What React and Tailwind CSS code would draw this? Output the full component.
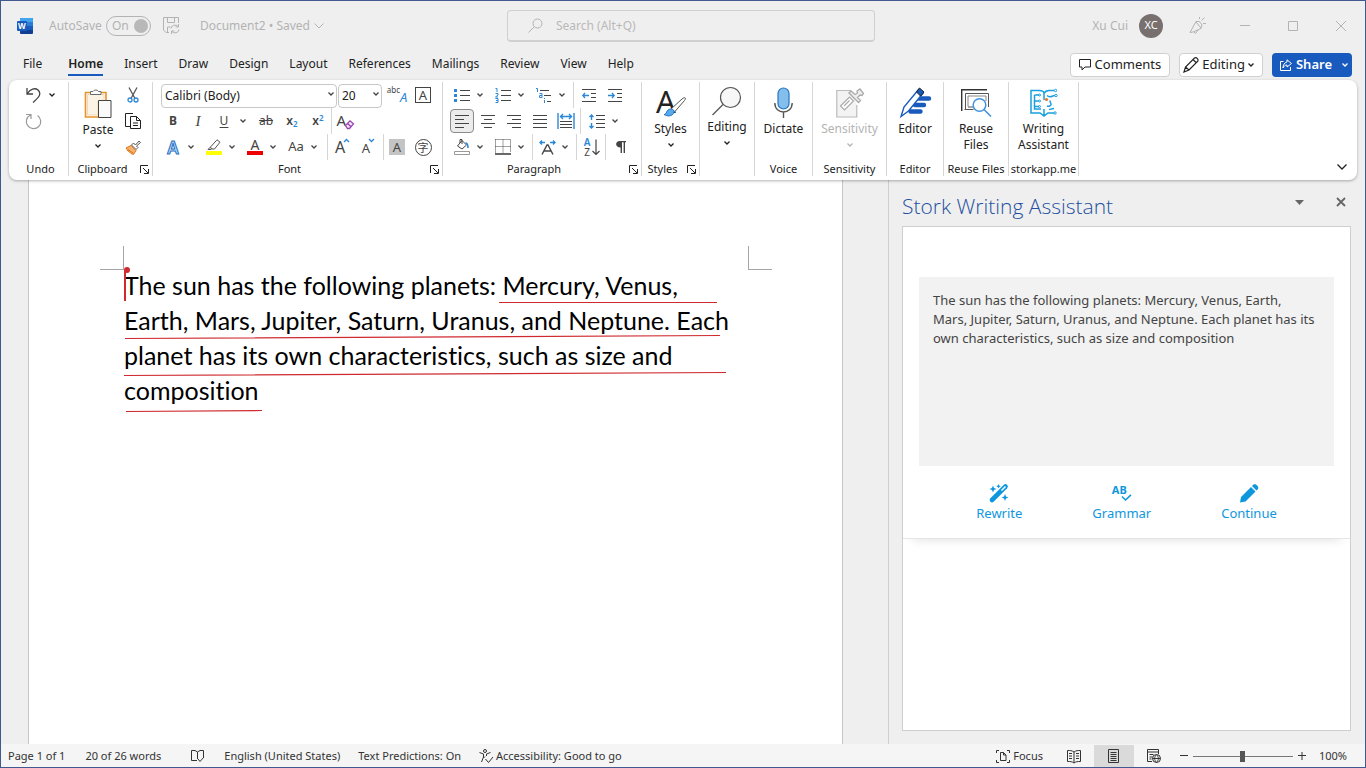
import React, { useState } from 'react';

const Icon = ({ w = 16, h = 16, className = '', children }) => (
    <svg
        width={w}
        height={h}
        viewBox={`0 0 ${w} ${h}`}
        fill="none"
        stroke="currentColor"
        className={`shrink-0 overflow-visible ${className}`}
        aria-hidden="true"
    >
        {children}
    </svg>
);

const Glyph = ({ x, y, size, fill = 'currentColor', bold, children }) => (
    <text x={x} y={y} fontSize={size} fill={fill} stroke="none" fontWeight={bold ? 700 : 400}>
        {children}
    </text>
);

const Chevron = ({ className = '' }) => (
    <Icon w={6} h={4} className={className}>
        <path d="M0.5 0.5 3 3 5.5 0.5" strokeWidth="1.3" />
    </Icon>
);

const Tool = ({ label, wide, children }) => (
    <button aria-label={label} className={`flex h-[26px] shrink-0 items-center justify-center ${wide ? 'w-[26px]' : 'w-6'}`}>
        {children}
    </button>
);

const Drop = ({ label }) => (
    <button aria-label={label} className="flex h-[26px] w-3 shrink-0 items-center justify-center">
        <Chevron />
    </button>
);

const Split = ({ label, children }) => (
    <div className="mr-[5px] flex">
        <Tool label={label}>{children}</Tool>
        <Drop label={`${label} options`} />
    </div>
);

const Rule = ({ className = '' }) => <div className={`h-[26px] w-px shrink-0 bg-[#d6d6d6] ${className}`} />;

const Group = ({ title, launcher, width, children }) => (
    <section className={`flex shrink-0 flex-col border-r border-[#d6d6d6] ${width}`}>
        <div className="h-[81px]">{children}</div>
        <div className="relative flex h-3 items-center justify-center text-[11px] leading-3 whitespace-nowrap">
            <span className={launcher ? 'mr-4' : ''}>{title}</span>
            {launcher && (
                <button aria-label={`${title} settings`} className="absolute top-0.5 right-[3px]">
                    <Icon w={9} h={9}>
                        <path d="M0.5 8V0.5H8M3 3l5 5M8.5 4v4.5H4" />
                    </Icon>
                </button>
            )}
        </div>
    </section>
);

const BigButton = ({ icon, label, drop, disabled }) => (
    <button disabled={disabled} className={`flex w-full flex-col items-center ${disabled ? 'text-[#b4b4b4]' : ''}`}>
        <span className="flex h-[37px] items-center justify-center">{icon}</span>
        <span className="text-xs leading-4 whitespace-pre-line">{label}</span>
        {drop && <Chevron className="mt-1.5" />}
    </button>
);

const WordLogo = () => (
    <Icon w={16} h={16}>
        <g stroke="none">
            <rect x="3" width="13" height="16" rx="1" fill="#103f91" />
            <path d="M4 0h11a1 1 0 0 1 1 1v3H3V1a1 1 0 0 1 1-1z" fill="#41a5ee" />
            <path d="M3 4h13v4H3z" fill="#2b7cd3" />
            <path d="M3 8h13v4H3z" fill="#185abd" />
            <rect y="3" width="10" height="10" rx="1" fill="#185abd" />
        </g>
        <Glyph x="1" y="11" size="8" fill="#fff" bold>W</Glyph>
    </Icon>
);

const SaveIcon = () => (
    <Icon w={17} h={17}>
        <path d="M6 15.5H3L.5 13V.5h15V6M4.5.5v5h7v-5M4.5 15.5V10h3" />
        <path d="M8 11.5a4 4 0 0 1 7-2M15.5 7v3h-3M16 12.5a4 4 0 0 1-7 2M8.5 17v-3h3" />
    </Icon>
);

const WhatsNewIcon = () => (
    <Icon w={17} h={17}>
        <path d="M1 15.500 7 4.500h3.500L13 8l-1 3.500-8 3.500zM7 5l5 6M5 15l1.500 1.500 2.500-3.500M10.500 2V0M12.500 3.500 15.500.5M14 6.500h3" />
    </Icon>
);

const lines = (rows) => rows.map(([x1, x2], i) => <path key={i} d={`M${x1} ${i * 4 + 1.5}H${x2}`} />);

const Align = ({ rows }) => <Icon w={15} h={15}>{lines(rows)}</Icon>;

const A = ({ size = 'text-[15px]', className = '' }) => <span className={`${size} leading-none ${className}`}>A</span>;

const PasteIcon = () => (
    <Icon w={28} h={31}>
        <path d="M6 4.5H1.5V29H15M17 4.5h5V12" stroke="#e8912d" strokeWidth="1.6" />
        <path d="M3.5 6.5h16.500V13h-6v14H3.5z" fill="#fbf3e6" stroke="#f5d9ae" />
        <path d="M6.5 6.5v-3h2.500a3 2.500 0 0 1 5.500 0h2.500v3z" fill="#fff" stroke="#6b6b6b" />
        <path d="M14.5 12.5h12.500v17h-12.500z" fill="#fafafa" stroke="#444" />
    </Icon>
);

const CutIcon = () => (
    <Icon w={12} h={16}>
        <path d="M2 .5 8 11.500M10 .5 4 11.500" stroke="#555" strokeWidth="1.3" />
        <circle cx="3" cy="13" r="2" stroke="#2b88d8" strokeWidth="1.3" />
        <circle cx="9" cy="13" r="2" stroke="#2b88d8" strokeWidth="1.3" />
    </Icon>
);

const CopyIcon = () => (
    <Icon w={17} h={16}>
        <path d="M5 13.5H.5V.5H8M5.500 3.5h6l4 4v8h-10zM11.5 3.5v4h4M8 10h5M8 12.5h5" />
    </Icon>
);

const PainterIcon = () => (
    <Icon w={16} h={15}>
        <path d="M1 8 6 5.500l5 5L8.500 14.500 6 13.500 4.500 12 3 11z" fill="#f7b26b" stroke="#d8751c" />
        <path d="M3 9.500 8 13" stroke="#d8751c" />
        <path d="m6.500 5 2-2 2 2L14 1l1.500 1.500L11.500 6l1.500 1.500-2 2z" fill="#fff" stroke="#555" />
    </Icon>
);

const ClipboardGroup = () => (
    <Group title="Clipboard" launcher width="w-[84px]">
        <div className="flex pl-2">
            <div className="w-[42px] pt-[3px]">
                <BigButton icon={<PasteIcon />} label="Paste" drop />
            </div>
            <div className="ml-px">
                <Tool label="Cut" wide><CutIcon /></Tool>
                <Tool label="Copy" wide><CopyIcon /></Tool>
                <Tool label="Format painter" wide><PainterIcon /></Tool>
            </div>
        </div>
    </Group>
);

const FontGroup = () => (
    <Group title="Font" launcher width="w-[290px]">
        <div className="pl-2 text-[#444]">
            <div className="flex h-[26px] items-center">
                <div className="relative">
                    <select aria-label="Font name" className="h-6 w-44 appearance-none rounded border border-[#c8c8c8] pl-[3px] text-xs text-[#222]">
                        <option>Calibri (Body)</option>
                    </select>
                    <Chevron className="pointer-events-none absolute top-[10px] right-[3px]" />
                </div>
                <div className="relative ml-px">
                    <select aria-label="Font size" className="h-6 w-11 appearance-none rounded border border-[#c8c8c8] pl-[3px] text-xs text-[#222]">
                        <option>20</option>
                    </select>
                    <Chevron className="pointer-events-none absolute top-[10px] right-[3px]" />
                </div>
                <div className="ml-0.5 flex">
                    <Tool label="Phonetic guide" wide>
                        <span className="flex h-[18px]">
                            <span className="text-[8px] leading-[8px]">abc</span>
                            <A size="text-[13px]" className="self-end text-[#2b88d8] italic" />
                        </span>
                    </Tool>
                    <Tool label="Character border" wide>
                        <span className="flex size-4 items-center justify-center border border-[#444]">
                            <A size="text-[13px]" />
                        </span>
                    </Tool>
                </div>
            </div>
            <div className="flex h-[26px] items-center">
                <Tool label="Bold"><span className="text-xs font-bold">B</span></Tool>
                <Tool label="Italic" wide><span className="font-['Liberation_Serif',serif] text-[15px] italic">I</span></Tool>
                <Tool label="Underline" wide><span className="text-xs underline underline-offset-2">U</span></Tool>
                <Drop label="Underline style" />
                <div className="ml-1 flex">
                    <Tool label="Strikethrough" wide><span className="text-xs line-through">ab</span></Tool>
                    <Tool label="Subscript" wide>
                        <span className="text-xs font-semibold">x<sub className="text-[8px] text-[#2b88d8]">2</sub></span>
                    </Tool>
                    <Tool label="Superscript" wide>
                        <span className="text-xs font-semibold">x<sup className="text-[8px] text-[#2b88d8]">2</sup></span>
                    </Tool>
                </div>
                <Rule />
                <Tool label="Clear formatting" wide>
                    <span className="relative flex h-4 w-[17px]">
                        <A />
                        <Icon w={9} h={9} className="absolute right-0 bottom-0">
                            <path d="M.5 5.500 5 .8l3.500 3L4.500 8.500H2.500zM2.500 3.500 6 6.800" fill="#f3e4f8" stroke="#9a44b5" strokeWidth="1.3" />
                        </Icon>
                    </span>
                </Tool>
            </div>
            <div className="flex h-[26px] items-center">
                <Split label="Text effects">
                    <span className="text-[17px] leading-none font-semibold text-[#bfe0fa] [-webkit-text-stroke:1px_#1f6fc4]">A</span>
                </Split>
                <Split label="Highlight colour">
                    <Icon w={16} h={16}>
                        <path d="M4.500 8 11 .8l3 2.400L8.500 10H5.500zM4.500 8 2 10.500h3l1-1" stroke="#555" />
                        <path d="M0 14h16" stroke="#ff0" strokeWidth="4" />
                    </Icon>
                </Split>
                <Split label="Font colour">
                    <span className="flex w-4 flex-col items-center border-b-4 border-[#e00]"><span className="text-sm leading-3">A</span></span>
                </Split>
                <Split label="Change case"><span className="text-[13px]">Aa</span></Split>
                <Rule className="mr-px ml-0.5" />
                <Tool label="Grow font" wide>
                    <span className="relative pr-1"><A size="text-base" />
                        <Icon w={5} h={3} className="absolute top-1 right-0"><path d="M0 3 2.500.5 5 3" stroke="#2b88d8" strokeWidth="1.3" /></Icon>
                    </span>
                </Tool>
                <Tool label="Shrink font" wide>
                    <span className="relative pr-1"><A size="text-[13px]" />
                        <Icon w={5} h={3} className="absolute top-1 right-0"><path d="M0 0 2.500 2.500 5 0" stroke="#2b88d8" strokeWidth="1.3" /></Icon>
                    </span>
                </Tool>
                <Rule className="ml-0.5" />
                <Tool label="Character shading" wide>
                    <span className="flex size-4 items-center justify-center bg-[#c4c4c4]"><A size="text-[13px]" /></span>
                </Tool>
                <Tool label="Enclose characters" wide>
                    <span className="flex size-[17px] items-center justify-center rounded-full border border-[#444] font-['Noto_Sans_CJK_SC',sans-serif] text-[11px] leading-none">字</span>
                </Tool>
            </div>
        </div>
    </Group>
);

const ParagraphGroup = () => (
    <Group title="Paragraph" launcher width="w-[199px]">
        <div className="pl-[7px] text-[#444]">
            <div className="flex h-[26px] items-center">
                <Split label="Bullets">
                    <Icon w={16} h={15}>
                        <path d="M6 2.5h10M6 7.5h10M6 12.5h10" />
                        <path d="M0 2.5h3M0 7.5h3M0 12.5h3" stroke="#2b88d8" strokeWidth="3" />
                    </Icon>
                </Split>
                <Split label="Numbering">
                    <Icon w={16} h={15}>
                        <path d="M6 2.5h10M6 7.5h10M6 12.5h10" />
                        <path d="M.5.5H2V4M.5 5.500H3V7L.5 9H3M.5 10.500H3v4H.5M1 12.500h2" stroke="#2b88d8" />
                    </Icon>
                </Split>
                <Split label="Multilevel list">
                    <Icon w={16} h={15}>
                        <path d="M4 2.5h9M8 7.5h7M11 13.5h4" />
                        <path d="M0 .5h1.500V4M3.500 5.500H6v4H3.500v-2H6M8.500 12v3M8.500 10v1" stroke="#2b88d8" />
                    </Icon>
                </Split>
                <Rule className="mr-0.5" />
                <Tool label="Decrease indent" wide>
                    <Icon w={15} h={15}>
                        <path d="M0 1.5h14M9 5.5h5M9 9.5h5M0 13.5h14" />
                        <path d="M7 7.5H.8M3 5 .8 7.5 3 10" stroke="#2b88d8" strokeWidth="1.3" />
                    </Icon>
                </Tool>
                <Tool label="Increase indent" wide>
                    <Icon w={15} h={15}>
                        <path d="M0 1.5h14M9 5.5h5M9 9.5h5M0 13.5h14" />
                        <path d="M0 7.5h6.200M4 5l2.200 2.500L4 10" stroke="#2b88d8" strokeWidth="1.3" />
                    </Icon>
                </Tool>
            </div>
            <div className="flex h-[26px] items-center">
                <button aria-label="Align left" className="flex size-6 items-center justify-center rounded border border-[#8a8a8a] bg-[#ececec]">
                    <Align rows={[[0, 14], [0, 9], [0, 14], [0, 9]]} />
                </button>
                <div className="ml-px flex">
                    <Tool label="Centre" wide><Align rows={[[0, 14], [3, 11], [0, 14], [3, 11]]} /></Tool>
                    <Tool label="Align right" wide><Align rows={[[0, 14], [5, 14], [0, 14], [5, 14]]} /></Tool>
                    <Tool label="Justify" wide><Align rows={[[0, 14], [0, 14], [0, 14], [0, 14]]} /></Tool>
                    <Tool label="Distribute" wide>
                        <Icon w={18} h={16}>
                            <path d="M3 8.5h12M3 11.5h12M3 14.5h12" />
                            <path d="M1 0v16M17 0v16M3 3.5h12M6 1 3.500 3.500 6 6M12 1l2.500 2.500L12 6" stroke="#2b88d8" strokeWidth="1.4" />
                        </Icon>
                    </Tool>
                </div>
                <Rule className="mr-1 ml-px" />
                <Tool label="Line spacing">
                    <Icon w={16} h={15}>
                        <path d="M7 1.5h9M7 5.5h9M7 9.5h9M7 13.5h9" />
                        <path d="M2.500 1v5M.5 3l2-2 2 2M2.500 9v5M.5 12l2 2 2-2" stroke="#2b88d8" strokeWidth="1.4" />
                    </Icon>
                </Tool>
                <Drop label="Line spacing options" />
            </div>
            <div className="flex h-[26px] items-center">
                <Split label="Shading">
                    <Icon w={16} h={16}>
                        <path d="M3.500 7 8 1.500l4.500 4.500L8 10zM6 4V.5h2V5" />
                        <path d="M11.500 4c2 0 2.500 2 2.500 5" stroke="#2b88d8" strokeWidth="1.6" />
                        <path d="M.5 12.5h15v3H.5z" stroke="#999" fill="#fff" />
                    </Icon>
                </Split>
                <Split label="Borders">
                    <Icon w={16} h={16}>
                        <path d="M.5.5h15v13M.5.5v13M8 .5v13M.5 7.5h15" strokeDasharray="1 1" />
                        <path d="M0 15h16" strokeWidth="1.6" />
                    </Icon>
                </Split>
                <Rule className="mr-0.5" />
                <Split label="Asian layout">
                    <Icon w={17} h={15}>
                        <path d="M3 14.500 8 5h1l5 9.500M5 11h7" strokeWidth="1.4" />
                        <path d="M6 2.500H1M3 .5l-2 2 2 2M11 2.500h5M14 .5l2 2-2 2" stroke="#2b88d8" strokeWidth="1.4" />
                    </Icon>
                </Split>
                <Rule className="mr-0.5" />
                <Tool label="Sort" wide>
                    <span className="flex items-center gap-0.5">
                        <span className="flex flex-col text-[10px] leading-[10px]">
                            <span className="font-semibold text-[#2b88d8]">A</span>
                            <span>Z</span>
                        </span>
                        <Icon w={8} h={16}><path d="M4 .5v15M.5 12 4 15.500 7.500 12" strokeWidth="1.2" /></Icon>
                    </span>
                </Tool>
                <Rule className="mr-0.5" />
                <Tool label="Show paragraph marks" wide>
                    <Icon w={10} h={12}>
                        <path d="M4 0h6v1.300H9V12H7.600V1.300H6V12H4.600V6.500C-1.200 6.500-1.200 0 4 0z" fill="currentColor" stroke="none" />
                    </Icon>
                </Tool>
            </div>
        </div>
    </Group>
);

const StylesIcon = () => (
    <Icon w={30} h={29}>
        <Glyph x="0" y="25" size="31">A</Glyph>
        <path d="m15 21 11-10c3-2.500 4.500-1 2.500 1.500L18.500 24z" fill="#fff" stroke="#555" />
        <path d="M8 26.500c3 0 2-5 6.500-5.500 3 0 4.500 2 3 4.500-2 3-6 3-9.500 1z" fill="#5aa9ec" stroke="#1f6fc4" />
    </Icon>
);

const FindIcon = () => (
    <Icon w={30} h={30}>
        <circle cx="18.5" cy="11.5" r="10" fill="#f7f7f7" stroke="#555" strokeWidth="1.2" />
        <path d="M11 18.500.5 29" stroke="#555" strokeWidth="1.3" />
    </Icon>
);

const MicIcon = () => (
    <Icon w={19} h={31}>
        <rect x="4" y="1" width="11" height="21" rx="5.5" fill="#83beec" stroke="#2474c4" strokeWidth="1.2" />
        <path d="M.8 16c0 12 17.400 12 17.400 0M9.500 25v6" stroke="#555" strokeWidth="1.4" />
    </Icon>
);

const SensitivityIcon = () => (
    <Icon w={28} h={30}>
        <path d="M15 2.500H.8v26.500h20V17" fill="#f3f3f3" stroke="#bbb" strokeWidth="1.2" />
        <path d="m4.500 18 9-9 4 4-9 9zM8 18l5.500-5.500" fill="#fff" stroke="#aaa" strokeWidth="1.2" />
        <path d="m13 5 9.500 9.500 2-2-3-3 2.500-2.500 2 .5 1.500-2-3.500-4.500-3 2 .5 2-2.500 1.500L15 3z" fill="#eee" stroke="#aaa" strokeWidth="1.3" />
    </Icon>
);

const EditorIcon = () => (
    <Icon w={31} h={31}>
        <path d="M19 11.500h10M15 18h9M10.500 24.500h10" stroke="#185abd" strokeWidth="4.4" strokeLinecap="round" />
        <path d="M1 29.500 4 20 18.500 2.500l4.500 3.800L8.500 24z" fill="#fff" stroke="#185abd" strokeWidth="1.4" />
        <path d="M16.500 5 19.500 1l4.500 4-3.500 4z" fill="#185abd" />
    </Icon>
);

const ReuseIcon = () => (
    <Icon w={31} h={28}>
        <path d="M.7 22V.7H26" stroke="#333" strokeWidth="1.4" />
        <path d="M4.500 20V4.500h23V18M3.500 20.500h9" stroke="#555" />
        <path d="M7 17.500V7h18v5" stroke="#888" />
        <path d="M7 18h6" stroke="#555" />
        <circle cx="18.5" cy="16" r="6.3" fill="#fff" stroke="#4292dc" strokeWidth="1.5" />
        <path d="m23 20.500 7 7" stroke="#4292dc" strokeWidth="1.6" />
    </Icon>
);

const StorkIcon = () => (
    <Icon w={28} h={28} className="text-[#18a0de]">
        <path d="M9 1.500H1V24h9l4 3 4-3h6M14 27V20M9 1.500c3 0 5 1 5 3V11M14 4.500c1-2 2.500-3 5-3h5M4.500 6H9M4.500 12h4M4.500 17.500H9M4.500 6v14H11" strokeWidth="1.5" />
        <path d="M17 6.500c3 3 5 0 8 0M20 11.500c0 2 1 2.500 1 4s-2 2-4 1.500M19 20.500c2 0 2-1 5-1" strokeWidth="1.5" />
        <circle cx="25.5" cy="1.5" r="1.2" />
        <circle cx="26" cy="6.5" r="1.2" />
        <circle cx="25" cy="24" r="1.2" />
        <circle cx="9.5" cy="6" r="1" />
        <circle cx="9.5" cy="12" r="1" />
        <circle cx="9.5" cy="17.5" r="1" />
        <circle cx="16.5" cy="10.5" r="1.6" fill="#e8762c" stroke="none" />
    </Icon>
);

const Ribbon = () => (
    <div className="relative z-10 mx-2 flex h-[100px] shrink-0 rounded-lg bg-white pt-0.5 shadow-[0_1px_3px_rgba(0,0,0,0.3)]">
        <div className="flex min-w-0 flex-1 pb-1">
            <Group title="Undo" width="w-[60px] pl-1">
                <div className="pl-[7px]">
                    <div className="flex">
                        <Tool label="Undo" wide>
                            <Icon w={15} h={16}>
                                <path d="M1 1v6h6M1.500 6.500C4 2 9 .5 12 3c4 4 1 7-5 12.500" stroke="#444" strokeWidth="1.3" />
                            </Icon>
                        </Tool>
                        <Drop label="Undo history" />
                    </div>
                    <div className="text-[#999]">
                        <Tool label="Repeat" wide>
                            <Icon w={17} h={16}>
                                <path d="M1 1.500h5V6M5.500 2a7.200 7.200 0 1 0 7 .5" strokeWidth="1.2" />
                            </Icon>
                        </Tool>
                    </div>
                </div>
            </Group>
            <ClipboardGroup />
            <FontGroup />
            <ParagraphGroup />
            <Group title="Styles" launcher width="w-[58px]">
                <div className="pt-0.5"><BigButton icon={<StylesIcon />} label="Styles" drop /></div>
            </Group>
            <Group title="" width="w-[55px]"><BigButton icon={<FindIcon />} label="Editing" drop /></Group>
            <Group title="Voice" width="w-[58px]">
                <div className="pt-0.5"><BigButton icon={<MicIcon />} label="Dictate" /></div>
            </Group>
            <Group title="Sensitivity" width="w-[74px]">
                <div className="pt-0.5"><BigButton icon={<SensitivityIcon />} label="Sensitivity" drop disabled /></div>
            </Group>
            <Group title="Editor" width="w-[57px]">
                <div className="pt-0.5"><BigButton icon={<EditorIcon />} label="Editor" /></div>
            </Group>
            <Group title="Reuse Files" width="w-[65px]">
                <div className="pt-0.5"><BigButton icon={<ReuseIcon />} label={'Reuse\nFiles'} /></div>
            </Group>
            <Group title="storkapp.me" width="w-[70px]">
                <div className="pt-0.5"><BigButton icon={<StorkIcon />} label={'Writing\nAssistant'} /></div>
            </Group>
        </div>
        <button aria-label="Collapse ribbon" className="self-end p-2.5">
            <Icon w={10} h={6}><path d="M.5.5 5 5 9.500.5" strokeWidth="1.3" /></Icon>
        </button>
    </div>
);

const TitleBar = () => (
    <header className="flex h-[49px] shrink-0 items-center text-xs text-[#b3b3b3]">
        <div className="flex flex-1 basis-0 items-center pl-4">
            <WordLogo />
            <label htmlFor="autosave" className="ml-4">AutoSave</label>
            <span className="relative ml-1 flex h-5 w-[45px] items-center rounded-full border border-[#b3b3b3] pl-[5px]">
                On
                <span className="absolute right-0.5 size-3.5 rounded-full bg-[#b8b8b8]" />
                <input id="autosave" type="checkbox" defaultChecked className="absolute inset-0 cursor-pointer opacity-0" />
            </span>
            <button aria-label="Save" className="ml-3"><SaveIcon /></button>
            <button className="ml-5 flex items-center gap-1 whitespace-nowrap">
                Document2 • Saved
                <Icon w={10} h={6}><path d="M.5.5 5 5 9.500.5" /></Icon>
            </button>
        </div>
        <div className="relative w-[368px]">
            <Icon w={15} h={15} className="absolute top-2 left-[21px]">
                <circle cx="9.5" cy="5.5" r="4.5" />
                <path d="M6 9 .5 14.500" />
            </Icon>
            <input
                aria-label="Search"
                placeholder="Search (Alt+Q)"
                className="h-8 w-full rounded border border-b-2 border-[#d0d0d0] pl-12 text-xs placeholder:text-[#b9b9b9] focus:outline-none"
            />
        </div>
        <div className="flex flex-1 basis-0 items-center justify-end">
            <span className="mr-[11px]">Xu Cui</span>
            <span className="mr-2.5 flex size-6 items-center justify-center rounded-full bg-[#77706e] text-[11px] text-white">XC</span>
            <button aria-label="What's new" className="flex w-12 justify-center"><WhatsNewIcon /></button>
            <button aria-label="Minimize" className="flex w-12 justify-center"><Icon w={10} h={10}><path d="M0 4.5h10" /></Icon></button>
            <button aria-label="Maximize" className="flex w-12 justify-center"><Icon w={10} h={10}><path d="M.5.5h9v9h-9z" /></Icon></button>
            <button aria-label="Close" className="flex w-12 justify-center"><Icon w={10} h={10}><path d="m0 0 10 10M10 0 0 10" /></Icon></button>
        </div>
    </header>
);

const TABS = ['File', 'Home', 'Insert', 'Draw', 'Design', 'Layout', 'References', 'Mailings', 'Review', 'View', 'Help'];

const TabRow = () => {
    const [active, setActive] = useState('Home');

    return (
        <nav className="flex h-[30px] shrink-0 items-center justify-between pr-[13px] pl-[22px] text-xs">
            <div className="flex gap-[21px]">
                {TABS.map((tab) => (
                    <button
                        key={tab}
                        onClick={() => setActive(tab)}
                        className={`border-b-2 leading-5 ${tab === 'File' ? 'mr-[5px]' : ''} ${
                            tab === active ? 'border-[#185abd] font-semibold' : 'border-transparent'
                        }`}
                    >
                        {tab}
                    </button>
                ))}
            </div>
            <div className="flex items-center gap-[9px] text-[13px]">
                <button className="flex h-6 items-center gap-1 rounded border border-[#d0d0d0] bg-white px-2">
                    <Icon w={12} h={12}><path d="M.5.5h11v7.500H6L3 11V8H.5z" /></Icon>
                    Comments
                </button>
                <button className="flex h-6 items-center gap-[3px] rounded border border-[#d0d0d0] bg-white pr-2 pl-[3px]">
                    <Icon w={16} h={16}><path d="M1 15 2.500 10 11.500 1c2-1 4 1 3.500 3L6 13zM10 2.500 13.500 6M2.500 10 6 13" strokeWidth="1.2" /></Icon>
                    Editing
                    <Chevron />
                </button>
                <button className="flex h-6 items-center gap-1 rounded bg-[#185abd] pr-1 pl-2 font-semibold text-white">
                    <Icon w={12} h={12}>
                        <path d="M3.500 2.500h-3v9h10V8M7 .8l4.500 3.700L7 8V6C5 6 4 7 3 9c0-3 1.500-5.500 4-6z" />
                    </Icon>
                    Share
                    <Chevron className="ml-1.5" />
                </button>
            </div>
        </nav>
    );
};

const Page = () => (
    <main className="flex min-w-0 flex-1 pr-[45px] pl-[27px]">
        <div className="flex-1 border-x border-[#c6c6c6] bg-white pt-[88px] pl-[95px]">
            <div className="relative w-[624px]">
                <div className="absolute -top-[22px] -left-6 h-6 w-6 border-r border-b border-[#a6a6a6]" />
                <div className="absolute -top-[22px] -right-6 h-6 w-6 border-b border-l border-[#a6a6a6]" />
                <p className="font-['Lato','Noto_Sans',sans-serif] text-[25px] leading-[35px] whitespace-nowrap text-black [font-variant-ligatures:none]">
                    The sun has the following planets: Mercury, Venus,<br />
                    Earth, Mars, Jupiter, Saturn, Uranus, and Neptune. Each<br />
                    planet has its own characteristics, such as size and<br />
                    composition
                </p>
                <svg viewBox="0 0 624 144" className="pointer-events-none absolute top-0 left-0 h-36 w-full overflow-visible" fill="none" stroke="#cf2a2f" aria-hidden="true">
                    <path d="M375 34.500H593M1 70.500 596 67.500M0 107.500 602 104.500M2 143.500 138 142.500" strokeWidth="1.2" />
                    <path d="M1 3v30" strokeWidth="2" />
                    <circle cx="3" cy="2" r="3" fill="#cf2a2f" stroke="none" />
                </svg>
            </div>
        </div>
    </main>
);

const RewriteIcon = () => (
    <Icon w={20} h={20}>
        <path d="m3 17 13.500-13.500" strokeWidth="4.6" strokeLinecap="round" />
        <path d="m12.500 7.500 4-4" stroke="#fff" strokeWidth="1.4" />
        <path d="M4 2.500 5 5l2.500 1L5 7 4 9.500 3 7 .5 6 3 5zM9.500 1l.7 1.600 1.600.7-1.600.7-.7 1.600-.7-1.600-1.600-.7 1.600-.7zM16 11l1 2.500 2.500 1L17 15.500 16 18l-1-2.500-2.500-1 2.500-1z" fill="currentColor" stroke="none" />
    </Icon>
);

const GrammarIcon = () => (
    <span className="relative block h-5 w-5">
        <span className="absolute top-px left-0 text-[11px] leading-3 font-bold">AB</span>
        <Icon w={11} h={7} className="absolute right-0 bottom-0.5"><path d="m1 2.500 3.500 3.500L10 .8" strokeWidth="1.6" /></Icon>
    </span>
);

const PencilIcon = () => (
    <Icon w={20} h={20}>
        <path d="M1 19.500 2 14 12 4l4.500 4.500-10 10zM13 3l1.500-1.500c2-1.500 6 2 4.500 4.500L17.500 7.500z" fill="currentColor" stroke="none" />
    </Icon>
);

const ACTIONS = [
    { label: 'Rewrite', icon: <RewriteIcon /> },
    { label: 'Grammar', icon: <GrammarIcon /> },
    { label: 'Continue', icon: <PencilIcon /> },
];

const AssistantPanel = () => {
    const [text, setText] = useState(
        'The sun has the following planets: Mercury, Venus, Earth, Mars, Jupiter, Saturn, Uranus, and Neptune. Each planet has its own characteristics, such as size and composition'
    );

    return (
        <aside className="flex w-[477px] shrink-0 flex-col border-l border-[#cfcfcf] pt-2.5 pr-3.5 pb-[13px] pl-[13px]">
            <div className="flex h-9 shrink-0 items-start justify-between">
                <h2 className="font-['Open_Sans','Noto_Sans',sans-serif] text-[21px] leading-8 font-light text-[#1f4fa0]">Stork Writing Assistant</h2>
                <div className="flex items-center gap-8 pt-[7px] pr-[5px] text-[#666]">
                    <button aria-label="Panel options">
                        <Icon w={9} h={5}><path d="M0 0h9L4.500 5z" fill="currentColor" stroke="none" /></Icon>
                    </button>
                    <button aria-label="Close panel">
                        <Icon w={10} h={10}><path d="m1 1 8 8M9 1 1 9" strokeWidth="1.8" /></Icon>
                    </button>
                </div>
            </div>
            <div className="flex-1 border border-[#cfcfcf] bg-white">
                <div className="border-b border-[#e6e6e6] px-4 pt-[50px] pb-[15px] shadow-[0_10px_10px_-10px_rgba(0,0,0,0.15)]">
                    <textarea
                        aria-label="Text to improve"
                        value={text}
                        onChange={(e) => setText(e.target.value)}
                        className="block h-[189px] w-full resize-none bg-[#f2f2f2] pt-3.5 pr-4 pl-3.5 text-[13px] leading-[19px] text-[#444] focus:outline-none"
                    />
                    <div className="mt-[17px] flex justify-center gap-[70px] text-[13px] leading-5 text-[#0f97de]">
                        {ACTIONS.map(({ label, icon }) => (
                            <button key={label} className="flex flex-col items-center">
                                {icon}
                                <span>{label}</span>
                            </button>
                        ))}
                    </div>
                </div>
            </div>
        </aside>
    );
};

const StatusBar = () => {
    const [zoom, setZoom] = useState(100);

    return (
        <footer className="flex h-[23px] shrink-0 items-center bg-[#f5f5f5] pt-px pr-[18px] pl-[7px] text-[11px] whitespace-nowrap text-[#333]">
            <span>Page 1 of 1</span>
            <span className="ml-5">20 of 26 words</span>
            <button aria-label="Proofing" className="ml-[30px]">
                <Icon w={13} h={12}>
                    <path d="M6 10.5H.5V.5H4l2.500 1.500L9 .5h3.500V7M6.500 2v7M7 9l2 2.500L13 7" />
                </Icon>
            </button>
            <span className="ml-5">English (United States)</span>
            <span className="ml-[18px]">Text Predictions: On</span>
            <button className="ml-[18px] flex items-center gap-0.5">
                <Icon w={15} h={14}>
                    <circle cx="6" cy="2" r="1.5" />
                    <path d="M.5 3.500 4.500 5v3l-2 5M11.500 3.500 7.500 5v2M4.500 9 6 7.500M6.500 10l3 3.500L14 8" />
                </Icon>
                Accessibility: Good to go
            </button>
            <div className="ml-auto flex h-full items-center">
                <button className="mr-[11px] flex items-center gap-[3px]">
                    <Icon w={14} h={13}>
                        <path d="M3 .5H.5V3M11 .5h2.500V3M.5 10v2.500H3M13.500 10v2.500H11M4.500 2.5h3l2.500 2.500v5.500H4.500zM7.500 2.500V5H10" />
                    </Icon>
                    Focus
                </button>
                <button aria-label="Read mode" className="flex w-10 justify-center">
                    <Icon w={14} h={13}>
                        <path d="M7 2C5 .5 3 .5.5.5v11c3 0 4.500 0 6.500 1.500 2-1.500 3.500-1.500 6.500-1.500V.5C11 .5 9 .5 7 2zM7 2v11M2 3.500h3M2 6h3M2 8.500h3M9 3.500h3M9 6h3M9 8.500h3" />
                    </Icon>
                </button>
                <button aria-label="Print layout" className="flex h-full w-10 items-center justify-center bg-[#dadada]">
                    <Icon w={11} h={14}><path d="M.5.5h10v13H.5zM2.500 3.5h6M2.500 5.5h6M2.500 7.5h6M2.500 9.5h6M2.500 11.5h6" /></Icon>
                </button>
                <button aria-label="Web layout" className="flex w-10 justify-center">
                    <Icon w={14} h={14}>
                        <path d="M5 12.5H.5V.5h11V5M.5 3h11M2.500 5.500h4M2.500 8h3M2.500 10h2" />
                        <circle cx="9.5" cy="9.5" r="4" />
                        <path d="M5.500 9.500h8M9.500 5.500c-2.500 3-2.500 5 0 8 2.500-3 2.500-5 0-8z" />
                    </Icon>
                </button>
                <button aria-label="Zoom out" onClick={() => setZoom(zoom - 10)} className="ml-1.5">
                    <Icon w={8} h={8}><path d="M0 3.5h8" /></Icon>
                </button>
                <input
                    type="range"
                    aria-label="Zoom"
                    min="10"
                    max="190"
                    value={zoom}
                    onChange={(e) => setZoom(Number(e.target.value))}
                    className="mx-[5px] h-3 w-[100px] appearance-none bg-[linear-gradient(#777,#777)] bg-[length:100%_1px] bg-center bg-no-repeat [&::-webkit-slider-thumb]:h-[11px] [&::-webkit-slider-thumb]:w-[5px] [&::-webkit-slider-thumb]:appearance-none [&::-webkit-slider-thumb]:bg-[#555]"
                />
                <button aria-label="Zoom in" onClick={() => setZoom(zoom + 10)}>
                    <Icon w={8} h={8}><path d="M0 3.5h8M4 0v8" /></Icon>
                </button>
                <span className="ml-[13px]">{zoom}%</span>
            </div>
        </footer>
    );
};

export default function App() {
    return (
        <div className="flex h-screen flex-col overflow-hidden border border-[#41598f] bg-[#efefef] font-['Noto_Sans','Open_Sans',sans-serif] text-[#222]">
            <TitleBar />
            <TabRow />
            <Ribbon />
            <div className="flex min-h-0 flex-1">
                <Page />
                <AssistantPanel />
            </div>
            <StatusBar />
        </div>
    );
}
